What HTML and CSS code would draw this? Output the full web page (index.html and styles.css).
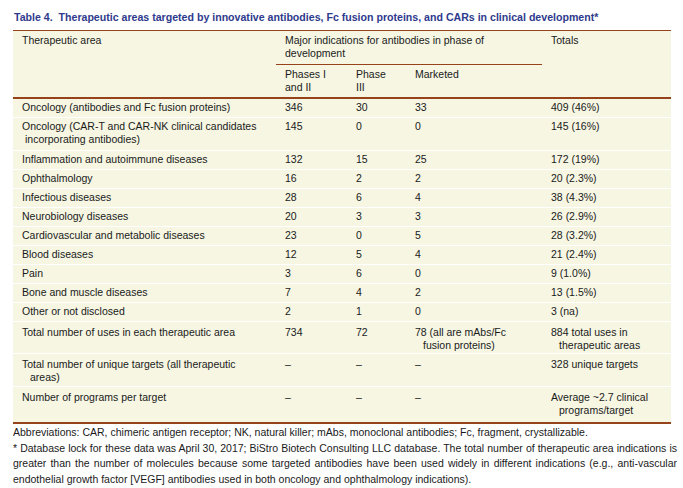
FILE: index.html
```html
<!DOCTYPE html>
<html>
<head>
<meta charset="utf-8">
<link rel="stylesheet" href="styles.css">
</head>
<body>
<div class="page">
  <h1 class="title">Table 4.&nbsp; Therapeutic areas targeted by innovative antibodies, Fc fusion proteins, and CARs in clinical development*</h1>
  <table class="tbl">
    <colgroup>
      <col class="w1"><col class="w2"><col class="w3"><col class="w4"><col class="w5">
    </colgroup>
    <thead>
      <tr class="h1">
        <th rowspan="2">Therapeutic area</th>
        <th colspan="3" class="grp">Major indications for antibodies in phase of<br>development</th>
        <th rowspan="2">Totals</th>
      </tr>
      <tr class="h2">
        <th>Phases I<br>and II</th>
        <th>Phase<br>III</th>
        <th>Marketed</th>
      </tr>
    </thead>
    <tbody>
      <tr><td>Oncology (antibodies and Fc fusion proteins)</td><td>346</td><td>30</td><td>33</td><td>409 (46%)</td></tr>
      <tr class="two"><td>Oncology (CAR-T and CAR-NK clinical candidates<br><span class="ind-s">incorporating antibodies)</span></td><td>145</td><td>0</td><td>0</td><td>145 (16%)</td></tr>
      <tr><td>Inflammation and autoimmune diseases</td><td>132</td><td>15</td><td>25</td><td>172 (19%)</td></tr>
      <tr><td>Ophthalmology</td><td>16</td><td>2</td><td>2</td><td>20 (2.3%)</td></tr>
      <tr><td>Infectious diseases</td><td>28</td><td>6</td><td>4</td><td>38 (4.3%)</td></tr>
      <tr><td>Neurobiology diseases</td><td>20</td><td>3</td><td>3</td><td>26 (2.9%)</td></tr>
      <tr><td>Cardiovascular and metabolic diseases</td><td>23</td><td>0</td><td>5</td><td>28 (3.2%)</td></tr>
      <tr><td>Blood diseases</td><td>12</td><td>5</td><td>4</td><td>21 (2.4%)</td></tr>
      <tr><td>Pain</td><td>3</td><td>6</td><td>0</td><td>9 (1.0%)</td></tr>
      <tr><td>Bone and muscle diseases</td><td>7</td><td>4</td><td>2</td><td>13 (1.5%)</td></tr>
      <tr><td>Other or not disclosed</td><td>2</td><td>1</td><td>0</td><td>3 (na)</td></tr>
      <tr class="tall first"><td>Total number of uses in each therapeutic area</td><td>734</td><td>72</td><td>78 (all are mAbs/Fc<br><span class="ind">fusion proteins)</span></td><td>884 total uses in<br><span class="ind">therapeutic areas</span></td></tr>
      <tr class="tall"><td>Total number of unique targets (all therapeutic<br><span class="ind">areas)</span></td><td>–</td><td>–</td><td>–</td><td>328 unique targets</td></tr>
      <tr class="tall last"><td>Number of programs per target</td><td>–</td><td>–</td><td>–</td><td>Average ~2.7 clinical<br><span class="ind">programs/target</span></td></tr>
    </tbody>
  </table>
  <div class="notes">
    <p class="abbr">Abbreviations: CAR, chimeric antigen receptor; NK, natural killer; mAbs, monoclonal antibodies; Fc, fragment, crystallizable.</p>
    <p class="foot">
      <span class="jl">* Database lock for these data was April 30, 2017; BiStro Biotech Consulting LLC database. The total number of therapeutic area indications is</span>
      <span class="jl">greater than the number of molecules because some targeted antibodies have been used widely in different indications (e.g., anti-vascular</span>
      <span class="ll">endothelial growth factor [VEGF] antibodies used in both oncology and ophthalmology indications).</span>
    </p>
  </div>
</div>
</body>
</html>
```

FILE: styles.css
```css
html, body {
  margin: 0;
  padding: 0;
  background: #ffffff;
}
.page {
  padding: 11px 6px 0 13px;
  font-family: "Liberation Sans", Arial, sans-serif;
  font-size: 10.5px;
  color: #1a1a1a;
}
.title {
  margin: 0 0 6px 1px;
  font-size: 10.6px;
  line-height: 13px;
  font-weight: bold;
  color: #2e3a8c;
  white-space: nowrap;
}
.tbl {
  width: 658px;
  border-collapse: collapse;
  table-layout: fixed;
  background: #f6f6e3;
  border-top: 1px solid #96431c;
  border-bottom: 2px solid #96431c;
}
.w1 { width: 263px; }
.w2 { width: 71px; }
.w3 { width: 59px; }
.w4 { width: 136px; }
.w5 { width: 129px; }
.tbl th, .tbl td {
  text-align: left;
  vertical-align: top;
  font-weight: normal;
  line-height: 13px;
  white-space: nowrap;
  padding: 2px 4px 3px 9px;
}
.tbl thead th {
  padding-top: 3px;
  padding-bottom: 4px;
}
.tbl .h1 .grp {
  border-bottom: 1px solid #96431c;
}
.tbl .h2 th {
  padding-bottom: 3px;
}
.tbl thead tr.h2 {
  border-bottom: 2px solid #96431c;
}
.tbl tbody tr {
  border-bottom: 1px solid #ffffff;
}
.tbl tbody tr:last-child {
  border-bottom: none;
}
.tbl tbody tr.two td {
  padding-bottom: 4px;
}
.tbl tbody tr.tall td {
  padding-top: 4px;
  padding-bottom: 2px;
}
.tbl tbody tr.tall.first td {
  padding-bottom: 1px;
}
.tbl tbody tr.tall.last td {
  padding-bottom: 5px;
}
.ind {
  padding-left: 8px;
}
.ind-s {
  padding-left: 3px;
}
.notes {
  width: 664px;
  margin-top: 1px;
}
.notes p {
  margin: 0;
  line-height: 15.7px;
}
.foot span {
  display: block;
}
.foot .jl {
  text-align: justify;
  text-align-last: justify;
}
.foot .ll {
  text-align: left;
}
```
